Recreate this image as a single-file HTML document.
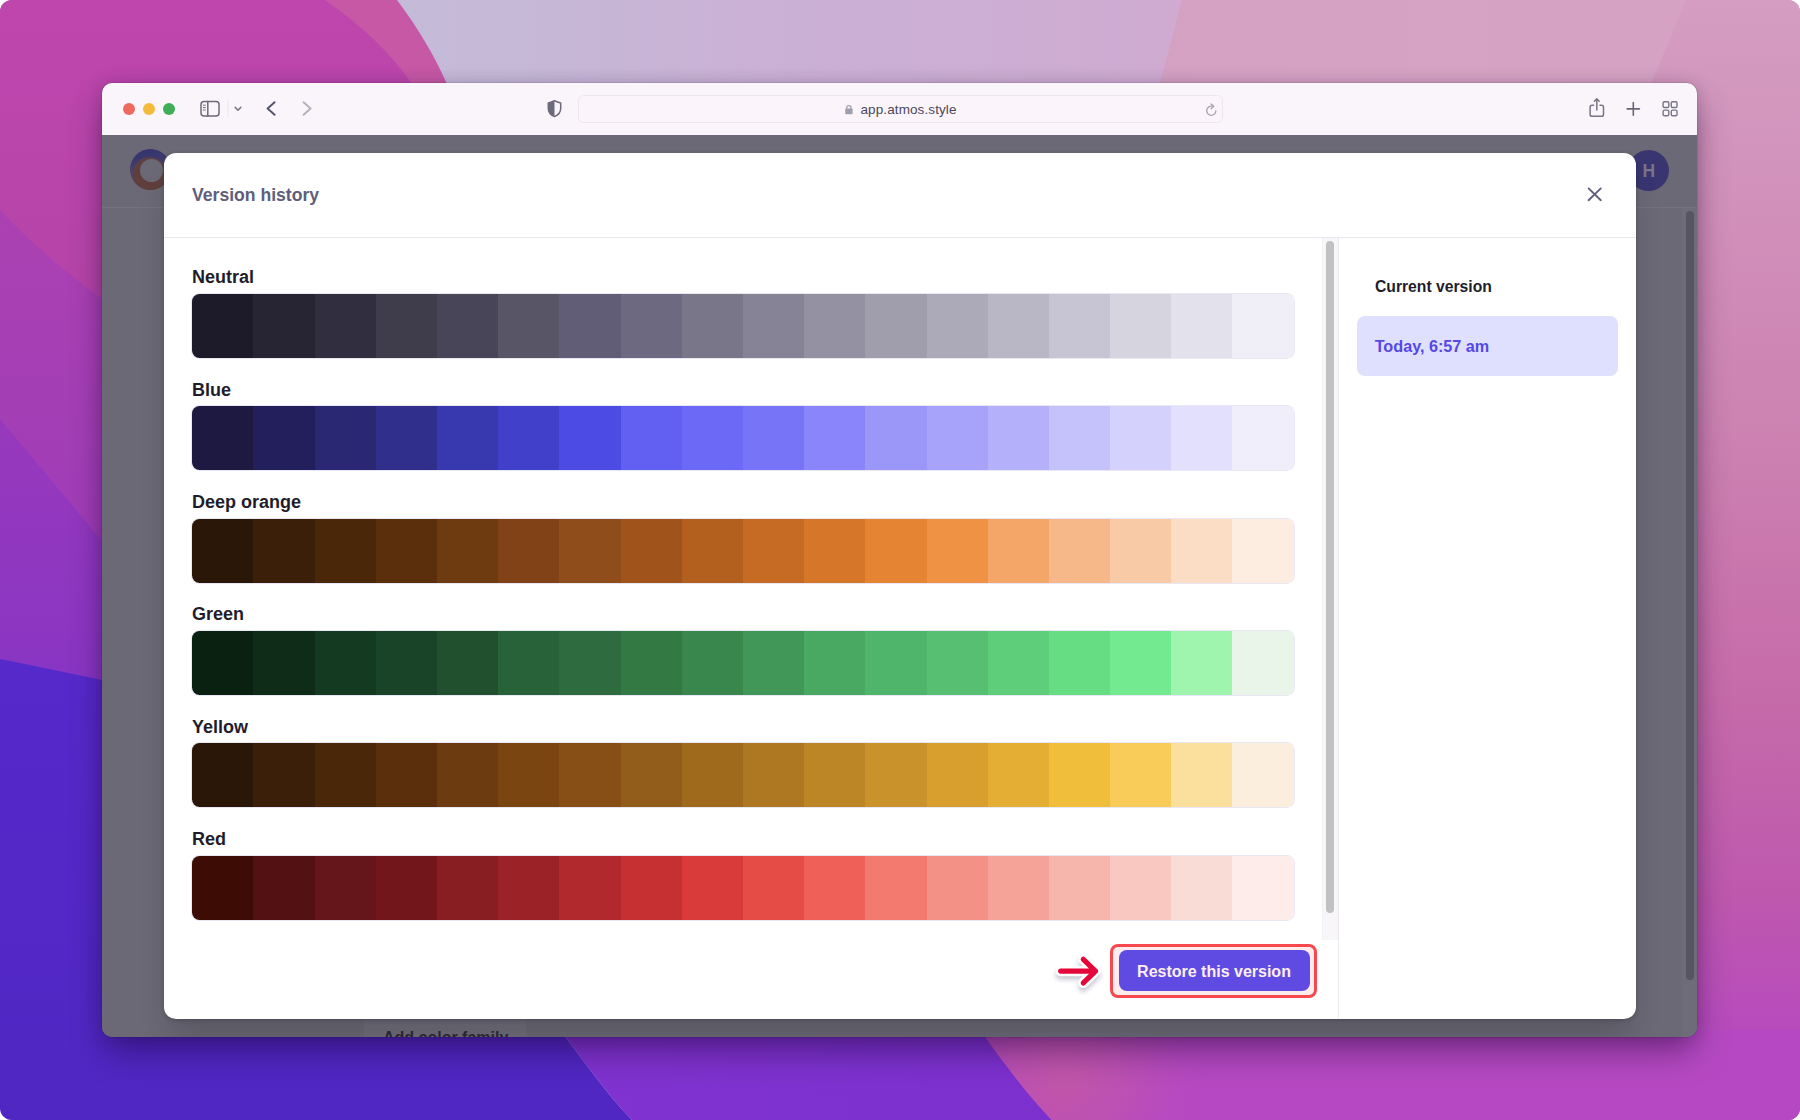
<!DOCTYPE html>
<html lang="en">
<head>
<meta charset="utf-8">
<title>Version history</title>
<style>
*{box-sizing:border-box;margin:0;padding:0}
html,body{width:1800px;height:1120px;overflow:hidden;background:#fff}
body{font-family:"Liberation Sans",sans-serif;position:relative}
.abs{position:absolute}
#stage{position:absolute;left:0;top:0;width:1800px;height:1120px;border-radius:12px;overflow:hidden}
#wall{position:absolute;left:0;top:0}
#win{position:absolute;left:102px;top:83px;width:1595px;height:954px;border-radius:10px;overflow:hidden;background:#6b6975;
 box-shadow:0 17px 34px -3px rgba(20,0,45,.43),0 1px 16px rgba(40,0,60,.17),0 0 0 .5px rgba(0,0,0,.16)}
#bar{position:absolute;left:0;top:0;width:1595px;height:52.6px;background:#faf4fb;border-bottom:1.3px solid #474552}
.tl{position:absolute;top:20px;width:12px;height:12px;border-radius:50%}
#url{position:absolute;left:475.7px;top:12.2px;width:645.6px;height:27.4px;border-radius:5.5px;background:#fbf5fb;border:1px solid #eee6ef}
#urltxt{position:absolute;left:758.5px;top:19px;font-size:13.5px;color:#4a4858;letter-spacing:.1px;line-height:16px;white-space:nowrap}
#page{position:absolute;left:0;top:52px;width:1595px;height:902px;background:#6b6975}
#navline{position:absolute;left:0;top:72px;width:1595px;height:1px;background:#74727d}
#logo{position:absolute;left:28px;top:14px;width:41px;height:41px;border-radius:50%;background:linear-gradient(170deg,#33316f 0%,#3b396e 28%,#4b4663 50%,#5a4149 68%,#5f3f3e 80%);overflow:hidden}
#logo2{position:absolute;left:3px;top:8px;width:33px;height:33px;border-radius:50%;background:linear-gradient(180deg,#5a4046,#5f3f3e 40%)}
#logo3{position:absolute;left:10px;top:9.5px;width:23px;height:23px;border-radius:50%;background:#6b6975}
#avatar{position:absolute;left:1526.3px;top:15px;width:41px;height:41px;border-radius:50%;background:#383570;color:#787686;font-weight:700;font-size:17.5px;line-height:43.4px;overflow:hidden;text-align:center}
#ptrack{position:absolute;left:1580px;top:73px;width:15px;height:829px;background:#6e6c78}
#pscroll{position:absolute;left:1584.3px;top:76px;width:8px;height:769px;border-radius:4px;background:#575564}
#addbtn{position:absolute;left:262px;top:883px;width:162px;height:40px;background:#706e7a;color:#2b2936;font-weight:700;font-size:16px;line-height:20px;padding:10px 0 0 19px;white-space:nowrap}
#modal{position:absolute;left:62px;top:70px;width:1472.3px;height:866px;border-radius:12px;background:#fff;overflow:hidden;box-shadow:0 24px 30px -6px rgba(20,18,32,.2),0 1px 4px rgba(20,18,32,.22)}
#mtitle{position:absolute;left:28px;top:30.8px;font-size:17.6px;font-weight:700;color:#605e7b;line-height:22px;white-space:nowrap}
#mhr{position:absolute;left:0;top:84px;width:1472px;height:1px;background:#e7e5ee}
.fam{position:absolute;left:28px;font-size:18px;font-weight:700;color:#1f1d2b;line-height:22px;white-space:nowrap}
.bar{position:absolute;left:28.3px;width:1101.4px;height:64px;border-radius:7.5px;overflow:hidden;display:flex;box-shadow:0 0 0 1px rgba(120,110,190,.17)}
.bar i{display:block;flex:1 1 0;height:100%}
#track{position:absolute;left:1158px;top:85px;width:15.6px;height:701.6px;background:#f9f6fa;border-left:1px solid #f3f0f6;border-right:1px solid #f5f2f8}
#thumb{position:absolute;left:1162.2px;top:88.3px;width:8.1px;height:671.6px;border-radius:4px;background:#c1c1c1}
#vdiv{position:absolute;left:1173.7px;top:85px;width:1.1px;height:781px;background:#eceaf1}
#cur{position:absolute;left:1211px;top:123.6px;font-size:15.7px;font-weight:700;color:#1f1d2b;line-height:20px;white-space:nowrap}
#sel{position:absolute;left:1192.5px;top:163px;width:261px;height:59.8px;border-radius:8px;background:#dfe0fd}
#seltxt{position:absolute;left:18.2px;top:20px;font-size:16.2px;font-weight:700;color:#5548e6;line-height:20px;white-space:nowrap}
#hl{position:absolute;left:946.2px;top:791px;width:206.8px;height:53.8px;border-radius:8px;border:3px solid #f6484f;background:#fdeceb}
#btn{position:absolute;left:954.5px;top:797px;width:191px;height:41.2px;border-radius:8px;background:#5f4be2;color:#fdeef0;font-size:16px;font-weight:700;line-height:43px;overflow:hidden;text-align:center;white-space:nowrap}
</style>
</head>
<body>
<div id="stage">
<svg id="wall" width="1800" height="1120" viewBox="0 0 1800 1120">
 <defs>
  <linearGradient id="gTop" x1="0" y1="0" x2="1" y2="0">
   <stop offset=".22" stop-color="#c4bbd8"/><stop offset=".45" stop-color="#cbb0d5"/><stop offset=".66" stop-color="#cfaad1"/>
  </linearGradient>
  <linearGradient id="gLeft" x1="0" y1="0" x2="0" y2="600" gradientUnits="userSpaceOnUse">
   <stop offset="0" stop-color="#be46ad"/><stop offset=".5" stop-color="#b544a8"/><stop offset="1" stop-color="#b044a6"/>
  </linearGradient>
  <linearGradient id="gL2" x1="0" y1="210" x2="0" y2="560" gradientUnits="userSpaceOnUse">
   <stop offset="0" stop-color="#ab41b2"/><stop offset="1" stop-color="#9f3cb8"/>
  </linearGradient>
  <linearGradient id="gL3" x1="0" y1="420" x2="0" y2="690" gradientUnits="userSpaceOnUse">
   <stop offset="0" stop-color="#9839bc"/><stop offset="1" stop-color="#8835c4"/>
  </linearGradient>
  <linearGradient id="gPink" x1="1160" y1="0" x2="1700" y2="0" gradientUnits="userSpaceOnUse">
   <stop offset="0" stop-color="#d4a1c3"/><stop offset=".5" stop-color="#d6a3c4"/><stop offset="1" stop-color="#d5a2c3"/>
  </linearGradient>
  <linearGradient id="gRight" x1="0" y1="0" x2="0" y2="1">
   <stop offset="0" stop-color="#d59dc1"/><stop offset=".36" stop-color="#cd84b3"/><stop offset=".62" stop-color="#c66ba9"/><stop offset=".8" stop-color="#be58ae"/><stop offset=".92" stop-color="#b74bbd"/><stop offset="1" stop-color="#b247c9"/>
  </linearGradient>
  <linearGradient id="gBlue" x1="0" y1="0" x2="0" y2="1">
   <stop offset="0" stop-color="#5629ca"/><stop offset="1" stop-color="#5027c3"/>
  </linearGradient>
  <linearGradient id="gBot" x1="0" y1="0" x2="1" y2="0">
   <stop offset="0" stop-color="#8133d0"/><stop offset="1" stop-color="#7c31cf"/>
  </linearGradient>
  <radialGradient id="gGlow" cx="1065" cy="1078" r="140" gradientUnits="userSpaceOnUse">
   <stop offset="0" stop-color="#c357a7" stop-opacity=".95"/><stop offset=".45" stop-color="#c055ab" stop-opacity=".6"/><stop offset="1" stop-color="#b94cb8" stop-opacity="0"/>
  </radialGradient>
 </defs>
 <rect width="1800" height="1120" fill="url(#gTop)"/>
 <path d="M1182 0H1800V1120H885Z" fill="url(#gPink)"/>
 <path d="M1686 0H1800V1120H1560L1636 120Z" fill="url(#gRight)"/>
 <path d="M0 0H397C418 28 434 55 447 84L470 140V700H0Z" fill="#c658a5"/>
 <path d="M0 0H325C362 26 390 52 412 84L440 130V700H0Z" fill="url(#gLeft)"/>
 <path d="M0 210C30 242 62 270 112 306V720H0Z" fill="url(#gL2)"/>
 <path d="M0 419L112 553V720H0Z" fill="url(#gL3)"/>
 <path d="M0 659C40 667 80 675 120 684L560 1030C585 1062 605 1092 632 1120H0Z" fill="url(#gBlue)"/>
 <path d="M560 1030H990C1005 1062 1025 1092 1052 1120H632C605 1092 585 1062 560 1030Z" fill="url(#gBot)"/>
 <path d="M980 1030H1800V1120H1052C1025 1092 1003 1062 980 1030Z" fill="#b649c3"/>
 <path d="M980 1030H1800V1120H1052C1025 1092 1003 1062 980 1030Z" fill="url(#gGlow)"/>
</svg>

<div id="win">
 <div id="bar">
  <div class="tl" style="left:20.6px;background:#ee695e"></div>
  <div class="tl" style="left:40.7px;background:#f3bb3c"></div>
  <div class="tl" style="left:60.7px;background:#40ae58"></div>
  <div id="url"></div>
  <div id="urltxt">app.atmos.style</div>
  <svg class="abs" style="left:0;top:0" width="1595" height="51" viewBox="102 83 1595 51" fill="none" stroke-linecap="round" stroke-linejoin="round">
   <!-- sidebar -->
   <rect x="201" y="101.5" width="18" height="14.6" rx="3" stroke="#6c6a7a" stroke-width="1.5"/>
   <path d="M207.8 101.5V116" stroke="#6c6a7a" stroke-width="1.5"/>
   <path d="M203.3 105.2H205.4M203.3 107.6H205.4M203.3 110H205.4" stroke="#6c6a7a" stroke-width="1"/>
   <path d="M228 100V117" stroke="#ebe5ed" stroke-width="1"/>
   <path d="M235.2 107.4L238 110.2L240.8 107.4" stroke="#777586" stroke-width="1.5"/>
   <!-- back / forward -->
   <path d="M274.6 102.2L267.6 108.5L274.6 114.8" stroke="#575569" stroke-width="2"/>
   <path d="M303.6 102.2L310.6 108.5L303.6 114.8" stroke="#b3b1be" stroke-width="2"/>
   <!-- shield -->
   <path d="M554.5 100.7C552.4 101.9 550.4 102.6 548.3 103V108.6C548.3 112.4 550.6 115 554.5 116.6C558.4 115 560.7 112.4 560.7 108.6V103C558.6 102.6 556.6 101.9 554.5 100.7Z" stroke="#6d6b7b" stroke-width="1.5"/>
   <path d="M554.5 100.7C552.4 101.9 550.4 102.6 548.3 103V108.6C548.3 112.4 550.6 115 554.5 116.6Z" fill="#6d6b7b" stroke="none"/>
   <!-- lock -->
   <rect x="845.2" y="108.6" width="7.4" height="5.6" rx="1" fill="#a09eae"/>
   <path d="M846.8 108.8V107.4C846.8 104.9 851 104.9 851 107.4V108.8" stroke="#a09eae" stroke-width="1.3"/>
   <!-- reload -->
   <path d="M1215.9 110.8A4.6 4.6 0 1 1 1212.2 106.2" stroke="#a3a1ae" stroke-width="1.3"/>
   <path d="M1211 103.9L1213.9 106.3L1211.2 108.6" stroke="#a3a1ae" stroke-width="1.3"/>
   <!-- share -->
   <path d="M1593.6 105.2H1592.2C1590.8 105.2 1590.1 105.9 1590.1 107.3V114.2C1590.1 115.6 1590.8 116.3 1592.2 116.3H1601.4C1602.8 116.3 1603.5 115.6 1603.5 114.2V107.3C1603.5 105.9 1602.8 105.2 1601.4 105.2H1600" stroke="#777586" stroke-width="1.5"/>
   <path d="M1596.8 110V98.9M1594.4 101.2L1596.8 98.8L1599.2 101.2" stroke="#777586" stroke-width="1.5"/>
   <!-- plus -->
   <path d="M1627.2 108.9H1639.4M1633.3 102.6V115.3" stroke="#676577" stroke-width="1.6"/>
   <!-- grid -->
   <rect x="1663.1" y="101.8" width="5.7" height="5.7" rx="1.3" stroke="#777586" stroke-width="1.4"/>
   <rect x="1671.3" y="101.8" width="5.7" height="5.7" rx="1.3" stroke="#777586" stroke-width="1.4"/>
   <rect x="1663.1" y="110.1" width="5.7" height="5.7" rx="1.3" stroke="#777586" stroke-width="1.4"/>
   <rect x="1671.3" y="110.1" width="5.7" height="5.7" rx="1.3" stroke="#777586" stroke-width="1.4"/>
  </svg>
 </div>
 <div id="page">
  <div id="navline"></div>
  <div id="logo"><div id="logo2"></div><div id="logo3"></div></div>
  <div id="avatar">H</div>
  <div id="ptrack"></div>
  <div id="pscroll"></div>
  <div id="addbtn">Add color family</div>
 </div>
<div id="modal">
 <div id="mtitle">Version history</div>
 <svg class="abs" style="left:1416px;top:27px" width="28" height="28" viewBox="1580 180 28 28" fill="none" stroke-linecap="round"><path d="M1588.6 188.4L1600.8 200.2M1600.8 188.4L1588.6 200.2" stroke="#5f5d7a" stroke-width="1.9"/></svg>
 <div id="mhr"></div>
<!--FAMS-->
 <div class="fam" style="top:112.9px">Neutral</div>
 <div class="bar" style="top:140.7px"><i style="background:#1d1b29"></i><i style="background:#272533"></i><i style="background:#312e40"></i><i style="background:#3f3d4b"></i><i style="background:#484558"></i><i style="background:#575566"></i><i style="background:#615d76"></i><i style="background:#6d6980"></i><i style="background:#79768a"></i><i style="background:#868396"></i><i style="background:#9492a2"></i><i style="background:#a09eac"></i><i style="background:#acaab9"></i><i style="background:#b9b7c5"></i><i style="background:#c7c5d3"></i><i style="background:#d5d4df"></i><i style="background:#e3e2ec"></i><i style="background:#f0eff7"></i></div>
 <div class="fam" style="top:226.0px">Blue</div>
 <div class="bar" style="top:253.1px"><i style="background:#1d1940"></i><i style="background:#221f5c"></i><i style="background:#2a2773"></i><i style="background:#302f8c"></i><i style="background:#3839ae"></i><i style="background:#4040cb"></i><i style="background:#4c4ce4"></i><i style="background:#6260f3"></i><i style="background:#6c69f7"></i><i style="background:#7874f7"></i><i style="background:#8a85fa"></i><i style="background:#9b97f9"></i><i style="background:#a7a2fa"></i><i style="background:#b5b0fa"></i><i style="background:#c5c1fb"></i><i style="background:#d4d1fc"></i><i style="background:#e2e0fd"></i><i style="background:#f0eefa"></i></div>
 <div class="fam" style="top:337.8px">Deep orange</div>
 <div class="bar" style="top:365.5px"><i style="background:#2a1708"></i><i style="background:#3b1f08"></i><i style="background:#4b270a"></i><i style="background:#5c2f0c"></i><i style="background:#6e3a10"></i><i style="background:#804216"></i><i style="background:#8e4d1a"></i><i style="background:#a0541c"></i><i style="background:#b3601f"></i><i style="background:#c56b23"></i><i style="background:#d67628"></i><i style="background:#e58433"></i><i style="background:#f09243"></i><i style="background:#f4a568"></i><i style="background:#f6b888"></i><i style="background:#f9caa6"></i><i style="background:#fbddc5"></i><i style="background:#fcede0"></i></div>
 <div class="fam" style="top:450.2px">Green</div>
 <div class="bar" style="top:477.9px"><i style="background:#0a2011"></i><i style="background:#0e2c17"></i><i style="background:#153a22"></i><i style="background:#1a4427"></i><i style="background:#20502d"></i><i style="background:#286238"></i><i style="background:#2e6b3e"></i><i style="background:#337944"></i><i style="background:#39874d"></i><i style="background:#419757"></i><i style="background:#49a862"></i><i style="background:#4fb56a"></i><i style="background:#56bf72"></i><i style="background:#5fce7b"></i><i style="background:#66dd83"></i><i style="background:#73ea90"></i><i style="background:#9ff5ae"></i><i style="background:#e8f5e8"></i></div>
 <div class="fam" style="top:562.7px">Yellow</div>
 <div class="bar" style="top:590.3px"><i style="background:#2a1708"></i><i style="background:#3b1f08"></i><i style="background:#4b270a"></i><i style="background:#5c2f0c"></i><i style="background:#6d3b10"></i><i style="background:#7a4511"></i><i style="background:#874e15"></i><i style="background:#925d1a"></i><i style="background:#a06a1d"></i><i style="background:#ae7722"></i><i style="background:#bc8526"></i><i style="background:#c9922a"></i><i style="background:#d89e2e"></i><i style="background:#e4ae34"></i><i style="background:#f0be3a"></i><i style="background:#f9cc5a"></i><i style="background:#fbdf9c"></i><i style="background:#fceedd"></i></div>
 <div class="fam" style="top:675.1px">Red</div>
 <div class="bar" style="top:702.7px"><i style="background:#3d0c05"></i><i style="background:#531114"></i><i style="background:#64161a"></i><i style="background:#73161b"></i><i style="background:#881d22"></i><i style="background:#9b2226"></i><i style="background:#b1292c"></i><i style="background:#c63032"></i><i style="background:#d93a3a"></i><i style="background:#e64c46"></i><i style="background:#ef6158"></i><i style="background:#f27a6e"></i><i style="background:#f49186"></i><i style="background:#f5a398"></i><i style="background:#f7b6ac"></i><i style="background:#f9c8c0"></i><i style="background:#fadcd6"></i><i style="background:#fdece9"></i></div>
<!--/FAMS-->
 <div id="track"></div><div id="thumb"></div><div id="vdiv"></div>
 <div id="cur">Current version</div>
 <div id="sel"><div id="seltxt">Today, 6:57 am</div></div>
 <svg class="abs" style="left:876px;top:787px;overflow:visible" width="70" height="62" viewBox="1040 940 70 62" fill="none" stroke-linecap="round" stroke-linejoin="round">
  <defs><filter id="ash" x="-30%" y="-40%" width="160%" height="200%"><feGaussianBlur stdDeviation="2.2"/></filter></defs>
  <path d="M1060.7 974.6H1095.5M1083.3 962.8L1095.5 974.6L1083.3 986.4" stroke="#3c3460" stroke-opacity=".28" stroke-width="10" filter="url(#ash)"/>
  <path d="M1060.7 971.1H1095.5M1083.3 959.3L1095.5 971.1L1083.3 982.9" stroke="#fff" stroke-width="10.4"/>
  <path d="M1060.7 971.1H1095.5M1083.3 959.3L1095.5 971.1L1083.3 982.9" stroke="#e6073a" stroke-width="5.2"/>
 </svg>
 <div id="hl"></div>
 <div id="btn">Restore this version</div>
</div>
</div>

</div>
</body>
</html>
